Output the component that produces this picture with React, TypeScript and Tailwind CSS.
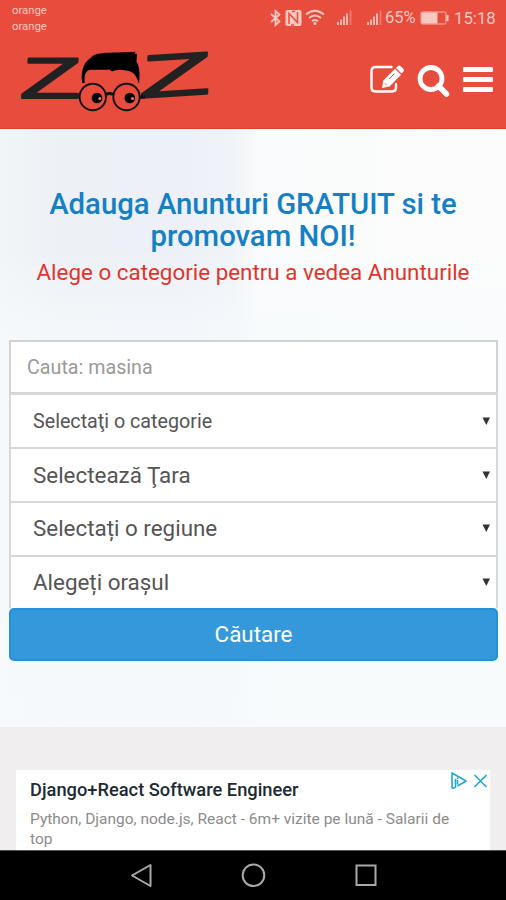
const selects = [
  { label: 'Selectaţi o categorie', className: 'h-[54px] pt-[1px] text-[19.7px]' },
  { label: 'Selectează Ţara', className: 'h-[54px] pt-[1px] text-[22.4px]' },
  { label: 'Selectați o regiune', className: 'h-[54px] text-[22.4px]' },
  { label: 'Alegeți orașul', className: 'h-[53px] text-[22.4px]' },
];

const Signal = () => (
  <svg width="18" height="18" viewBox="0 0 18 18" fill="#f7b8b0">
    <rect x="1" y="13" width="2" height="3" />
    <rect x="4" y="10.500" width="2" height="5.500" />
    <rect x="7" y="7.500" width="2" height="8.500" />
    <rect x="10" y="4.500" width="2" height="11.500" />
    <rect x="13.500" y="1.500" width="2" height="14.500" opacity="0.4" />
  </svg>
);

const StatusBar = () => (
  <div className="flex h-[36px] justify-between pl-[12px] pr-[10px] text-[#f9c8c2]">
    <div className="pt-[3px] text-[11.3px] leading-[16px]">
      <div>orange</div>
      <div>orange</div>
    </div>
    <div className="flex h-[36px] items-center">
      {/* Bluetooth */}
      <svg className="mr-[1px]" width="12" height="18" viewBox="0 0 12 18" fill="none" stroke="currentColor" strokeWidth="1.8">
        <path d="M1 5l8.500 7.500-4 3.500V2l4 3.500L1 13" />
      </svg>
      {/* NFC */}
      <svg className="ml-[2px]" width="17" height="18" viewBox="0 0 17 18">
        <rect x="0.500" y="1" width="16" height="16" rx="2" fill="currentColor" />
        <path d="M4 15V4.500l8.500 9V3M7 2.500h3M6 16h3" fill="none" stroke="#e74c3c" strokeWidth="1.500" />
      </svg>
      {/* Wi-Fi */}
      <svg className="ml-[3px]" width="20" height="18" viewBox="0 0 20 18" fill="none" stroke="currentColor" strokeWidth="1.800">
        <path d="M1 5.500q9-7.500 18 0M4 9q6-5 12 0M7 12.200q3-2.400 6 0" />
        <circle cx="10" cy="14.500" r="1.500" fill="currentColor" stroke="none" />
      </svg>
      <div className="ml-[11px] flex">
        <Signal />
        <div className="w-[12px]" />
        <Signal />
      </div>
      <span className="ml-[1px] w-[32px] text-[16.5px] leading-none">65%</span>
      <svg className="ml-[3px]" width="29" height="16" viewBox="0 0 29 16">
        <rect x="1" y="2" width="25" height="12" rx="1.500" fill="none" stroke="#f7b8b0" />
        <rect x="1.500" y="2.500" width="16" height="11" fill="currentColor" />
        <rect x="26.500" y="5" width="2" height="6" fill="currentColor" />
      </svg>
      <span className="ml-[5px] w-[42px] text-[16.800px] leading-none">15:18</span>
    </div>
  </div>
);

const Logo = () => (
  <svg className="ml-[15px] overflow-visible" width="220" height="70" viewBox="15 45 220 70" role="img" aria-label="ZOZ">
    <g fill="#222" stroke="#222" strokeWidth="1.900" strokeLinejoin="round" fontFamily="Liberation Sans, sans-serif">
      <text fontSize="57.500" transform="matrix(1.7 0 -0.08 1 19.500 97.700)">Z</text>
      <text fontSize="60.500" transform="matrix(1.92 -0.12 -0.06 1 139 98)">Z</text>
    </g>
    {/* Hair */}
    <path
      fill="#000"
      d="M82.300 83C80.500 72 83 63 91 57.500C97 51.500 108 53 118 52.500L135.500 51.700L134.300 53.500L137 54L136.500 62C140 67 140 76 139 84C137 77 134.500 71.500 126 70.500C120 69 116 70 112 71.500L109 69.500C102 70.500 94 69 89 70C84 72 84.500 78 84.600 83Z"
    />
    {/* Glasses */}
    <g fill="none" stroke="#111" strokeWidth="1.900">
      <path d="M73 95.900h6.500" stroke="#222" strokeWidth="5.500" />
      <circle cx="92.800" cy="97" r="13.200" />
      <circle cx="126.500" cy="97" r="13.200" />
      <path d="M106 94.500q3.500-2 7 0M139 97h6" strokeWidth="2.800" />
    </g>
    <circle cx="97" cy="98" r="5.300" fill="#000" />
    <circle cx="129.800" cy="98" r="5.300" fill="#000" />
    <circle cx="99.800" cy="98.500" r="1.500" fill="#ec8176" />
    <circle cx="132.500" cy="98.500" r="1.500" fill="#ec8176" />
  </svg>
);

const Header = () => (
  <header className="h-[129px] border-b border-[#d9402f] bg-[#e74c3c]">
    <StatusBar />
    <div className="flex pt-[9px]">
      <Logo />
      <div className="ml-[134px] flex pt-[19px]">
        <svg width="36" height="32" viewBox="0 0 36 32">
          <path
            d="M22.500 3H6.500Q2.500 3 2.500 7v16.500q0 4 4 4H23q4 0 4-4V20"
            fill="none"
            stroke="#fff"
            strokeWidth="2.400"
            strokeLinecap="round"
          />
          <path d="M13 24l1.300-7.500L26 4.800l6 6L20.500 22.500z" fill="#fff" />
          <path d="M27 4l2-2q1.300-1.300 2.800.2l2.500 2.500q1.500 1.500.2 2.800l-2 2z" fill="#fff" />
          <path d="M16 19.500l1.500 1.500M20 15l5.500-5.500" stroke="#e74c3c" strokeWidth="1" />
          <path d="M26.300 4.500l6 6" stroke="#e74c3c" strokeWidth="0.800" />
        </svg>
        <svg className="ml-[12px]" width="34" height="36" viewBox="0 0 34 36" fill="none" stroke="#fff">
          <circle cx="14" cy="14.500" r="11" strokeWidth="4.800" />
          <path d="M21.500 22l8 8" strokeWidth="5.500" strokeLinecap="round" />
        </svg>
        <div className="ml-[12px] flex flex-col gap-[5px] pt-[3px]">
          <div className="h-[5px] w-[30px] rounded-[1px] bg-white" />
          <div className="h-[5px] w-[30px] rounded-[1px] bg-white" />
          <div className="h-[5px] w-[30px] rounded-[1px] bg-white" />
        </div>
      </div>
    </div>
  </header>
);

const SearchForm = () => (
  <form className="mr-[8px] ml-[9px] mt-[53px] text-[#555]">
    <div className="flex h-[53px] items-center border-2 border-b border-[#d2d2d2] bg-white pl-[16px] pt-[1px] text-[19.7px] text-[#999]">
      Cauta: masina
    </div>
    {selects.map(({ label, className }) => (
      <div
        key={label}
        className={`flex items-center justify-between border-x-2 border-t-2 border-[#d8d8d8] bg-white pl-[22px] pr-[6px] ${className}`}
      >
        <span>{label}</span>
        <svg className="mb-[2px]" width="8" height="8" viewBox="0 0 8 8">
          <path d="M0.500 0.500h7.500L4.300 8z" fill="#333" />
        </svg>
      </div>
    ))}
    <button
      type="button"
      className="h-[53px] w-full rounded-[5px] border-2 border-[#2490d8] bg-[#3498db] text-[22.4px] text-white"
    >
      Căutare
    </button>
  </form>
);

const Hero = () => (
  <section className="h-[598px] bg-[linear-gradient(180deg,transparent_0%,transparent_20%,#f7fbfd99_33%,#f7fbfdcc_100%),linear-gradient(90deg,#f1f5f8_0%,#edf1f6_12%,#edf0f7_36%,#f0f3f8_46%,#fafbfc_51%,#fcfcfc_100%)] pt-[59px]">
    <h1 className="text-center text-[29.3px] leading-[32px] font-[480] text-[#1580c4]">
      Adauga Anunturi GRATUIT si te
      <br />
      promovam NOI!
    </h1>
    <p className="mt-[6px] text-center text-[22.4px] leading-[29px] text-[#e0352b]">
      Alege o categorie pentru a vedea Anunturile
    </p>
    <SearchForm />
  </section>
);

const Ad = () => (
  <section className="h-[123px] overflow-hidden bg-[#f0eeef] px-[16px] pt-[43px]">
    <div className="flex h-[80px] justify-between bg-white pl-[14px]">
      <div className="pt-[9px] whitespace-nowrap">
        <h2 className="text-[18.3px] leading-[22px] font-[480] text-[#202a33]">Django+React Software Engineer</h2>
        <p className="mt-[8px] text-[15.5px] leading-[20px] text-[#8b8b8b]">
          Python, Django, node.js, React - 6m+ vizite pe lună - Salarii de
          <br />
          top
        </p>
      </div>
      <svg className="mt-[1px] mr-[2px] shrink-0" width="38" height="20" viewBox="0 0 38 20" fill="none" stroke="#20a7cc" strokeWidth="1.600">
        <path d="M5 17H2V2l14 8-8.500 5M5.500 8v9" strokeLinejoin="round" />
        <path d="M7.500 6.500v1.500M7.500 9v4.500" />
        <path d="M24.500 4l12 12M36.500 4l-12 12" />
      </svg>
    </div>
  </section>
);

const NavBar = () => (
  <nav className="h-[50px] border-t border-[#555] bg-black">
    <svg width="506" height="49" viewBox="0 851 506 49" fill="none" stroke="#aaa" strokeWidth="2">
      <path d="M132 875.500l18.500-10.500v21z" strokeLinejoin="round" />
      <circle cx="253.500" cy="875.300" r="10.800" />
      <rect x="356.500" y="865.500" width="19" height="19.500" />
    </svg>
  </nav>
);

const App = () => {
  return (
    <div className="h-[900px] w-[506px] overflow-hidden bg-white font-['Roboto',sans-serif]">
      <Header />
      <Hero />
      <Ad />
      <NavBar />
    </div>
  );
};

export default App;
